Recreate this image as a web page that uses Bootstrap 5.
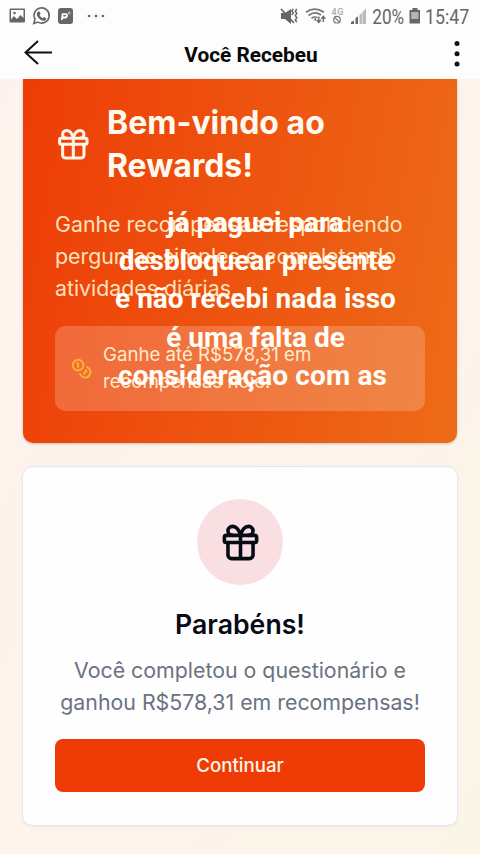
<!DOCTYPE html>
<html lang="pt-BR">
<head>
<meta charset="utf-8">
<meta name="viewport" content="width=device-width, initial-scale=1">
<title>Você Recebeu</title>
<link href="https://cdn.jsdelivr.net/npm/bootstrap@5.3.0/dist/css/bootstrap.min.css" rel="stylesheet">
<style>
body{font-family:Inter,"Liberation Sans",sans-serif;background:linear-gradient(120deg,#fff2ee,#fbf5e8);height:854px;overflow:hidden}
svg{display:block;flex:none;overflow:visible}
.app-head{height:79px;background:#fdfdfd;font-family:Roboto,sans-serif}
.status{height:32px;padding:0 10px 0 9px;color:#666}
.title-bar{height:47px;padding:0 15px 0 23px}
.title-bar h1{font-size:20.8px;line-height:47px;font-weight:700;color:#080808}
.page{padding:0 23px}
.hero{height:364px;padding:23px 32px 32px;border-radius:0 0 10px 10px;background:linear-gradient(100deg,#ee3d07,#ed6b18);box-shadow:0 1px 3px #0003;color:#fffaf0}
.hero h2{font-size:32px;line-height:42.67px;font-weight:700}
.hero-head{gap:15.400px}
.lead-copy{font-size:21.33px;line-height:32px;margin-top:20.700px;color:#ffe2bd;white-space:nowrap}
.bonus{height:85px;margin-top:22px;padding:1px 16px 0;gap:10.700px;border-radius:10.67px;background:#fff3;font-size:18.67px;line-height:26.67px;color:#ffecd0}
.caption-over{left:0;right:0;top:124.600px;padding-left:31px;font:700 28px/38.4px Roboto,sans-serif;color:#fffdf8;white-space:nowrap}
.caption-over span{letter-spacing:.12px;margin-left:-6px}
.reward{margin:23px -1px 0;height:360px;padding:32px 32px 0;border:1.4px solid #e6e7ea;border-radius:10.67px;background:#fefefe;box-shadow:0 1px 3px #0000000d}
.disc{width:86px;height:86px;background:#fadfe2}
.reward h2{font-size:26.67px;line-height:36px;font-weight:600;margin-top:21px;color:#070b16}
.reward p{font-size:21.33px;line-height:32px;color:#6b7280;margin-top:12px;white-space:nowrap}
.go{height:53px;margin-top:21px;border:0;border-radius:8px;background:#ef3b06;color:#fff5e8;font-size:18.67px;font-weight:500}
.go:hover{background:#d93403;color:#fff}
</style>
</head>
<body>
<header class="app-head">
  <div class="status d-flex justify-content-between align-items-center">
    <svg width="100" height="32" viewBox="9 0 100 32" fill="#666">
      <path fill-rule="evenodd" d="M10.500 8.500h13.500q1 0 1 1v12q0 1-1 1h-13.500q-1 0-1-1v-12q0-1 1-1zM11 10v9.500l3-3.500 3 3 3.500-4 3 3V10z"/><circle cx="14.500" cy="13" r="1.300"/>
      <path d="M33.800 23.500l1.200-4.300a7.600 7.600 0 1 1 2.900 2.900z" fill="none" stroke="#666" stroke-width="1.600"/>
      <path d="M38.300 11.500l1.300.1 1 2.500-1 1.200q1 2 3.100 3l1.300-1.300 2.300 1.200q.2 2.500-2.500 2.500-4-.3-6.600-4.800-1.200-3 1.100-4.400z"/>
      <rect x="58" y="8" width="15" height="16" rx="3"/>
      <path d="M61.800 20l.8-5.800h3.200q1.600.2 1.200 1.800-.4 1.500-1.800 1.500h-2.200" fill="none" stroke="#fff" stroke-width="1.800"/><circle cx="69.300" cy="13" r="1" fill="none" stroke="#ddd" stroke-width=".8"/>
      <circle cx="89" cy="16" r="1.300"/><circle cx="96" cy="16" r="1.300"/><circle cx="103" cy="16" r="1.300"/>
    </svg>
    <svg width="190" height="32" viewBox="280 0 190 32" fill="#666">
      <path d="M281 13h4l6-4v15l-6-5h-4z"/><path d="M281 9l13 14" stroke="#666" stroke-width="1.800"/><path d="M293.300 9l-1.500 2 1.500 2-1.500 2M296.800 9l-1.500 2.200 1.500 2.200-1.500 2.200 1.500 2.200-1.500 2.200 1.500 2.200" fill="none" stroke="#666" stroke-width="1.500"/>
      <path d="M306 12.300q8.500-6.500 18 0M308.500 15.500q6.300-5 12.500-.5M311.500 18.300q3-2.300 6-.5" fill="none" stroke="#777" stroke-width="1.700"/><path d="M313.500 19.500l2.500-1.500v3z"/>
      <path d="M318.800 16.500v5.500M316.800 20l2 2.500 2-2.500M323.300 22v-5.500M321.300 18.800l2-2.500 2 2.500" fill="none" stroke="#666" stroke-width="1.300"/>
      <text x="331.500" y="14.500" font-size="9" font-weight="500" fill="#aaa" textLength="12">4G</text>
      <circle cx="337" cy="19.700" r="3.300" fill="none" stroke="#777" stroke-width="1.200"/><path d="M334.700 17.500l4.600 4.400" stroke="#777" stroke-width="1.200"/>
      <path d="M351 24v-2l3-1.500V24zM355.500 24v-6l2.500-1.500V24z"/><path d="M359.500 24v-9l2.500-2V24zM362.500 24V12l3.500-3.500V24z" fill="#bbb"/>
      <text x="372.300" y="23.600" font-size="20" textLength="31.800" lengthAdjust="spacingAndGlyphs">20%</text>
      <path d="M412.500 8h5v2h2.500v13.500h-10.500V10h3z"/><path d="M411.200 12h7.200v7h-7.200z" fill="#b5b5b5"/>
      <text x="425" y="23.600" font-size="20" textLength="44.200" lengthAdjust="spacingAndGlyphs">15:47</text>
    </svg>
  </div>
  <div class="title-bar d-flex align-items-center justify-content-between">
    <svg width="30" height="47" viewBox="23 32 30 47" fill="none" stroke="#111" stroke-width="2"><path d="M52 52.500H25.500M38 41L25.500 52.500 38 64"/></svg>
    <h1 class="m-0">Você Recebeu</h1>
    <svg width="16" height="47" viewBox="449 32 16 47" fill="#111"><circle cx="457" cy="43.500" r="2.500"/><circle cx="457" cy="53.700" r="2.500"/><circle cx="457" cy="64" r="2.500"/></svg>
  </div>
</header>
<main class="page">
  <section class="hero position-relative">
    <div class="hero-head d-flex align-items-center">
      <svg width="36.600" height="36.600" viewBox="0 0 24 24" fill="none" stroke="#fff6e8" stroke-width="2" stroke-linecap="round" stroke-linejoin="round"><rect x="3" y="8" width="18" height="4" rx="1"/><path d="M12 8v13M19 12v7a2 2 0 0 1-2 2H7a2 2 0 0 1-2-2v-7M7.500 8a2.500 2.500 0 0 1 0-5A4.800 8 0 0 1 12 8a4.800 8 0 0 1 4.500-5 2.500 2.500 0 0 1 0 5"/></svg>
      <h2 class="m-0">Bem-vindo ao<br>Rewards!</h2>
    </div>
    <p class="lead-copy mb-0">Ganhe recompensas respondendo<br>perguntas simples e completando<br>atividades diárias.</p>
    <div class="bonus d-flex align-items-center">
      <svg width="21.300" height="21.300" viewBox="0 0 24 24" fill="none" stroke="#fbb62e" stroke-width="2.200" stroke-linecap="round" stroke-linejoin="round"><circle cx="8" cy="8" r="6"/><path d="M18.090 10.370A6 6 0 1 1 10.340 18M7 6h1v4M16.710 13.880l.7.710-2.820 2.820"/></svg>
      <span>Ganhe até R$578,31 em<br>recompensas hoje!</span>
    </div>
    <div class="caption-over position-absolute text-center">já paguei para<br>desbloquear presente<br>e não recebi nada isso<br>é uma falta de<br><span>consideração com as</span></div>
  </section>
  <section class="reward text-center">
    <div class="disc rounded-circle mx-auto d-flex align-items-center justify-content-center">
      <svg width="43" height="43" viewBox="0 0 24 24" fill="none" stroke="#070b16" stroke-width="2" stroke-linecap="round" stroke-linejoin="round"><rect x="3" y="8" width="18" height="4" rx="1"/><path d="M12 8v13M19 12v7a2 2 0 0 1-2 2H7a2 2 0 0 1-2-2v-7M7.500 8a2.500 2.500 0 0 1 0-5A4.800 8 0 0 1 12 8a4.800 8 0 0 1 4.500-5 2.500 2.500 0 0 1 0 5"/></svg>
    </div>
    <h2 class="mb-0">Parabéns!</h2>
    <p class="mb-0">Você completou o questionário e<br>ganhou R$578,31 em recompensas!</p>
    <button class="go btn w-100" type="button">Continuar</button>
  </section>
</main>
<script src="https://cdn.jsdelivr.net/npm/bootstrap@5.3.0/dist/js/bootstrap.bundle.min.js"></script>
</body>
</html>
